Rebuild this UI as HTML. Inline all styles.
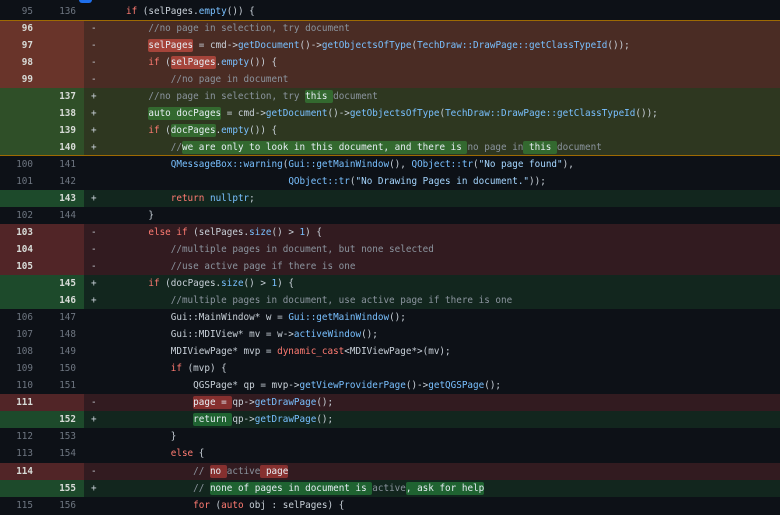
<!DOCTYPE html>
<html><head><meta charset="utf-8">
<style>
html,body{margin:0;padding:0;background:#0d1117;width:780px;height:515px;overflow:hidden}
#w{position:relative;width:780px;height:515px;overflow:hidden;font-family:"DejaVu Sans Mono",monospace;font-size:9.3px;color:#c9d1d9}
.r{position:absolute;left:0;width:780px;height:17.1px;line-height:17px}
.g{position:absolute;left:0;top:0;width:84px;height:100%}
.o,.n{position:absolute;top:0;text-align:right;width:30px;color:#6e7681}
.o{left:3px}.n{left:46px}
.m{position:absolute;left:91px;top:0;white-space:pre}
.c{position:absolute;left:103.6px;top:0;white-space:pre}
.Y .g{background:#69342a}.Y{background:#4a2c24}
.Z .g{background:#2f4f28}.Z{background:#2e3720}
.D .g{background:#512527}.D{background:#321b20}
.A .g{background:#1d4a2b}.A{background:#12261e}
.Y .o,.Z .n,.D .o,.A .n{color:#d8dcd8;font-weight:bold}
.k{color:#ff7b72}.b{color:#79c0ff}.t{color:#8b949e}.s{color:#a5d6ff}
.h{border-radius:2px;padding:1px 0;color:#e6edf3}
.Y .h{background:#a5443a}.Z .h{background:#33692f}
.D .h{background:#86302f}.A .h{background:#1f6331}
.ln{position:absolute;left:0;width:780px;height:1px;background:#9e6a03}
.bl{position:absolute;left:79px;top:-3px;width:13px;height:5.5px;border-radius:3px;background:#1f6feb}
</style></head><body><div id="w">
<div class="bl"></div>

<div class="r" style="top:3px"><div class="g"></div><span class="o">95</span><span class="n">136</span><span class="c">    <span class="k">if</span> (selPages.<span class="b">empty</span>()) {</span></div>

<div class="r Y" style="top:20px"><div class="g"></div><span class="o">96</span><span class="m">-</span><span class="c t">        //no page in selection, try document</span></div>
<div class="r Y" style="top:37px"><div class="g"></div><span class="o">97</span><span class="m">-</span><span class="c">        <span class="h">selPages</span> = cmd-&gt;<span class="b">getDocument</span>()-&gt;<span class="b">getObjectsOfType</span>(<span class="b">TechDraw::DrawPage::getClassTypeId</span>());</span></div>
<div class="r Y" style="top:54px"><div class="g"></div><span class="o">98</span><span class="m">-</span><span class="c">        <span class="k">if</span> (<span class="h">selPages</span>.<span class="b">empty</span>()) {</span></div>
<div class="r Y" style="top:71px"><div class="g"></div><span class="o">99</span><span class="m">-</span><span class="c t">            //no page in document</span></div>
<div class="r Z" style="top:88px"><div class="g"></div><span class="n">137</span><span class="m">+</span><span class="c t">        //no page in selection, try <span class="h">this </span>document</span></div>
<div class="r Z" style="top:105px"><div class="g"></div><span class="n">138</span><span class="m">+</span><span class="c">        <span class="h">auto docPages</span> = cmd-&gt;<span class="b">getDocument</span>()-&gt;<span class="b">getObjectsOfType</span>(<span class="b">TechDraw::DrawPage::getClassTypeId</span>());</span></div>
<div class="r Z" style="top:122px"><div class="g"></div><span class="n">139</span><span class="m">+</span><span class="c">        <span class="k">if</span> (<span class="h">docPages</span>.<span class="b">empty</span>()) {</span></div>
<div class="r Z" style="top:139px;height:17px"><div class="g"></div><span class="n">140</span><span class="m">+</span><span class="c t">            //<span class="h">we are only to look in this document, and there is </span>no page in<span class="h"> this </span>document</span></div>
<div class="ln" style="top:20px"></div>
<div class="ln" style="top:155px"></div>

<div class="r" style="top:156px"><div class="g"></div><span class="o">100</span><span class="n">141</span><span class="c">            <span class="b">QMessageBox::warning</span>(<span class="b">Gui::getMainWindow</span>(), <span class="b">QObject::tr</span>(<span class="s">"No page found"</span>),</span></div>
<div class="r" style="top:173px"><div class="g"></div><span class="o">101</span><span class="n">142</span><span class="c">                                 <span class="b">QObject::tr</span>(<span class="s">"No Drawing Pages in document."</span>));</span></div>
<div class="r A" style="top:190px"><div class="g"></div><span class="n">143</span><span class="m">+</span><span class="c">            <span class="k">return</span> <span class="b">nullptr</span>;</span></div>
<div class="r" style="top:207px"><div class="g"></div><span class="o">102</span><span class="n">144</span><span class="c">        }</span></div>
<div class="r D" style="top:224px"><div class="g"></div><span class="o">103</span><span class="m">-</span><span class="c">        <span class="k">else if</span> (selPages.<span class="b">size</span>() &gt; <span class="b">1</span>) {</span></div>
<div class="r D" style="top:241px"><div class="g"></div><span class="o">104</span><span class="m">-</span><span class="c t">            //multiple pages in document, but none selected</span></div>
<div class="r D" style="top:258px"><div class="g"></div><span class="o">105</span><span class="m">-</span><span class="c t">            //use active page if there is one</span></div>
<div class="r A" style="top:275px"><div class="g"></div><span class="n">145</span><span class="m">+</span><span class="c">        <span class="k">if</span> (docPages.<span class="b">size</span>() &gt; <span class="b">1</span>) {</span></div>
<div class="r A" style="top:292px"><div class="g"></div><span class="n">146</span><span class="m">+</span><span class="c t">            //multiple pages in document, use active page if there is one</span></div>
<div class="r" style="top:309px"><div class="g"></div><span class="o">106</span><span class="n">147</span><span class="c">            Gui::MainWindow* w = <span class="b">Gui::getMainWindow</span>();</span></div>
<div class="r" style="top:326px"><div class="g"></div><span class="o">107</span><span class="n">148</span><span class="c">            Gui::MDIView* mv = w-&gt;<span class="b">activeWindow</span>();</span></div>
<div class="r" style="top:343px"><div class="g"></div><span class="o">108</span><span class="n">149</span><span class="c">            MDIViewPage* mvp = <span class="k">dynamic_cast</span>&lt;MDIViewPage*&gt;(mv);</span></div>
<div class="r" style="top:360px"><div class="g"></div><span class="o">109</span><span class="n">150</span><span class="c">            <span class="k">if</span> (mvp) {</span></div>
<div class="r" style="top:377px"><div class="g"></div><span class="o">110</span><span class="n">151</span><span class="c">                QGSPage* qp = mvp-&gt;<span class="b">getViewProviderPage</span>()-&gt;<span class="b">getQGSPage</span>();</span></div>
<div class="r D" style="top:394px"><div class="g"></div><span class="o">111</span><span class="m">-</span><span class="c">                <span class="h">page = </span>qp-&gt;<span class="b">getDrawPage</span>();</span></div>
<div class="r A" style="top:411px"><div class="g"></div><span class="n">152</span><span class="m">+</span><span class="c">                <span class="h">return </span>qp-&gt;<span class="b">getDrawPage</span>();</span></div>
<div class="r" style="top:428px"><div class="g"></div><span class="o">112</span><span class="n">153</span><span class="c">            }</span></div>
<div class="r" style="top:445px"><div class="g"></div><span class="o">113</span><span class="n">154</span><span class="c">            <span class="k">else</span> {</span></div>
<div class="r D" style="top:463px"><div class="g"></div><span class="o">114</span><span class="m">-</span><span class="c t">                // <span class="h">no </span>active<span class="h"> page</span></span></div>
<div class="r A" style="top:480px"><div class="g"></div><span class="n">155</span><span class="m">+</span><span class="c t">                // <span class="h">none of pages in document is </span>active<span class="h">, ask for help</span></span></div>
<div class="r" style="top:497px"><div class="g"></div><span class="o">115</span><span class="n">156</span><span class="c">                <span class="k">for</span> (<span class="k">auto</span> obj : selPages) {</span></div>
</div></body></html>
